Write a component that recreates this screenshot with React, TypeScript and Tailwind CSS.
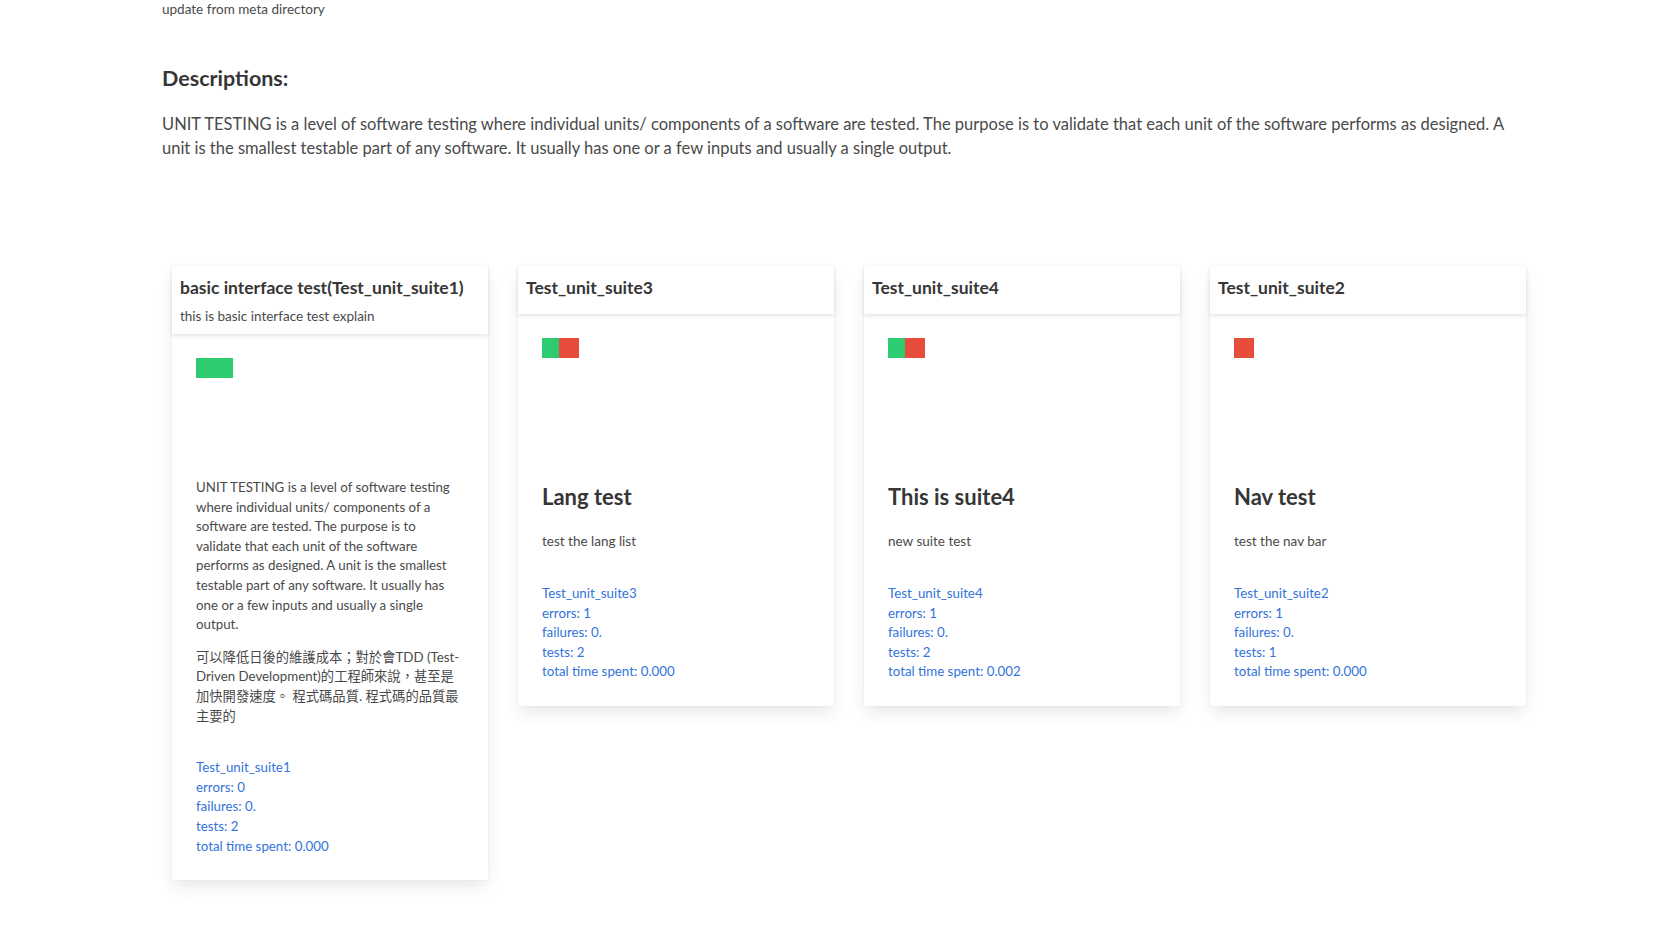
import React from 'react';

type Suite = {
  title: string;
  subtitle?: string;
  bar: { color: string; width: number }[];
  heading?: string;
  text?: string[];
  note?: string;
  name: string;
  errors: string;
  failures: string;
  tests: string;
  time: string;
};

const GREEN = 'bg-[#2ecc71]';
const RED = 'bg-[#e74c3c]';

const suites: Suite[] = [
  {
    title: 'basic interface test(Test_unit_suite1)',
    subtitle: 'this is basic interface test explain',
    bar: [{ color: GREEN, width: 37 }],
    text: [
      'UNIT TESTING is a level of software testing where individual units/ components of a software are tested. The purpose is to validate that each unit of the software performs as designed. A unit is the smallest testable part of any software. It usually has one or a few inputs and usually a single output.',
      '可以降低日後的維護成本；對於會TDD (Test-Driven Development)的工程師來說，甚至是加快開發速度。 程式碼品質. 程式碼的品質最主要的',
    ],
    name: 'Test_unit_suite1',
    errors: '0',
    failures: '0.',
    tests: '2',
    time: '0.000',
  },
  {
    title: 'Test_unit_suite3',
    bar: [
      { color: GREEN, width: 17 },
      { color: RED, width: 20 },
    ],
    heading: 'Lang test',
    note: 'test the lang list',
    name: 'Test_unit_suite3',
    errors: '1',
    failures: '0.',
    tests: '2',
    time: '0.000',
  },
  {
    title: 'Test_unit_suite4',
    bar: [
      { color: GREEN, width: 17 },
      { color: RED, width: 20 },
    ],
    heading: 'This is suite4',
    note: 'new suite test',
    name: 'Test_unit_suite4',
    errors: '1',
    failures: '0.',
    tests: '2',
    time: '0.002',
  },
  {
    title: 'Test_unit_suite2',
    bar: [{ color: RED, width: 20 }],
    heading: 'Nav test',
    note: 'test the nav bar',
    name: 'Test_unit_suite2',
    errors: '1',
    failures: '0.',
    tests: '1',
    time: '0.000',
  },
];

const SuiteCard: React.FC<{ suite: Suite }> = ({ suite }) => (
  <div className="w-[316px] shrink-0 bg-white shadow-[0_8px_16px_-2px_rgba(10,10,10,0.1),0_0_0_1px_rgba(10,10,10,0.02)]">
    <div className="px-2 pt-[10px] pb-2 shadow-[0_2px_4px_rgba(10,10,10,0.1)]">
      <p className="text-[17.5px] leading-6 font-bold text-[#363636] mb-[6px]">{suite.title}</p>
      {suite.subtitle && (
        <p className="text-[13.5px] leading-5 text-[#4a4a4a]">{suite.subtitle}</p>
      )}
    </div>
    <div className="px-6 pt-6 pb-6">
      <div className="h-[120px]">
        <div className="flex h-5">
          {suite.bar.map((b, i) => (
            <div key={i} className={`h-5 ${b.color}`} style={{ width: b.width }} />
          ))}
        </div>
      </div>
      {suite.heading && (
        <>
          <h3 className="mt-[26px] text-[22px] leading-[26px] font-bold text-[#363636]">
            {suite.heading}
          </h3>
          <p className="mt-[21px] text-[13.5px] leading-5 text-[#4a4a4a]">{suite.note}</p>
        </>
      )}
      {suite.text && (
        <div className="text-[13.3px] leading-[19.6px] text-[#4a4a4a]">
          <p>{suite.text[0]}</p>
          <p className="mt-[13px]">{suite.text[1]}</p>
        </div>
      )}
      <div
        className={`${suite.text ? 'mt-[32px]' : 'mt-[33px]'} text-[13.3px] leading-[19.6px] text-[#3273dc]`}
      >
        <p>{suite.name}</p>
        <p>errors: {suite.errors}</p>
        <p>failures: {suite.failures}</p>
        <p>tests: {suite.tests}</p>
        <p>total time spent: {suite.time}</p>
      </div>
    </div>
  </div>
);

const App: React.FC = () => {
  return (
    <div
      className="min-h-[937px] bg-white px-[162px] pb-10"
      style={{ fontFamily: 'Lato, "Noto Sans CJK TC", sans-serif' }}
    >
      <p className="text-[13.5px] leading-[18px] text-[#4a4a4a]">update from meta directory</p>

      <h2 className="mt-[45px] text-[21.5px] leading-[30px] font-bold text-[#363636]">
        Descriptions:
      </h2>
      <p className="mt-[19px] text-[16.5px] leading-6 text-[#4a4a4a]">
        UNIT TESTING is a level of software testing where individual units/ components of a
        software are tested. The purpose is to validate that each unit of the software performs as
        designed. A unit is the smallest testable part of any software. It usually has one or a few
        inputs and usually a single output.
      </p>

      <div className="mt-[106px] ml-[10px] flex items-start gap-[30px]">
        {suites.map((s) => (
          <SuiteCard key={s.name} suite={s} />
        ))}
      </div>
    </div>
  );
};

export default App;
